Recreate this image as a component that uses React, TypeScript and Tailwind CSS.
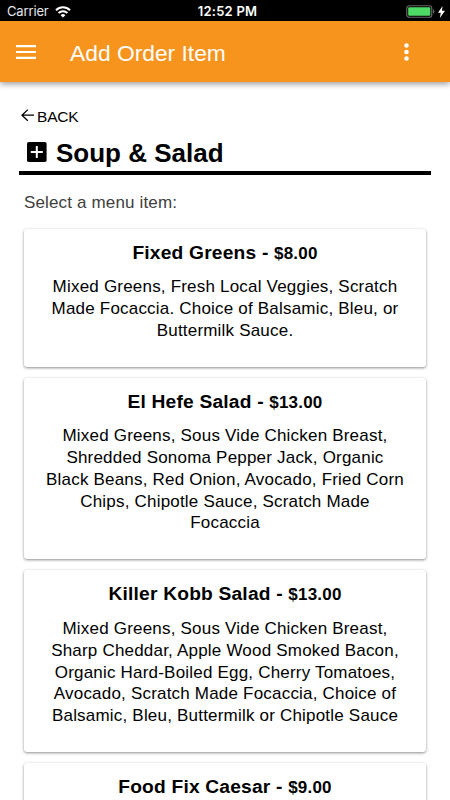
interface MenuItem {
  name: string
  price: string
  description?: string
}

const MENU_ITEMS: MenuItem[] = [
  {
    name: 'Fixed Greens',
    price: '$8.00',
    description:
      'Mixed Greens, Fresh Local Veggies, Scratch Made Focaccia. Choice of Balsamic, Bleu, or Buttermilk Sauce.',
  },
  {
    name: 'El Hefe Salad',
    price: '$13.00',
    description:
      'Mixed Greens, Sous Vide Chicken Breast, Shredded Sonoma Pepper Jack, Organic Black Beans, Red Onion, Avocado, Fried Corn Chips, Chipotle Sauce, Scratch Made Focaccia',
  },
  {
    name: 'Killer Kobb Salad',
    price: '$13.00',
    description:
      'Mixed Greens, Sous Vide Chicken Breast, Sharp Cheddar, Apple Wood Smoked Bacon, Organic Hard-Boiled Egg, Cherry Tomatoes, Avocado, Scratch Made Focaccia, Choice of Balsamic, Bleu, Buttermilk or Chipotle Sauce',
  },
  { name: 'Food Fix Caesar', price: '$9.00' },
]

function WifiIcon() {
  return (
    <svg width="16" height="12" viewBox="0 0 16 12" fill="none" stroke="#fff" strokeWidth="2">
      <path d="M1 4.2a10 10 0 0 1 14 0" />
      <path d="M3.6 7a6.3 6.3 0 0 1 8.8 0" />
      <path d="M8 11.6 5.6 9.2a3.4 3.4 0 0 1 4.8 0z" fill="#fff" stroke="none" />
    </svg>
  )
}

function StatusBar() {
  return (
    <div className="grid h-[21px] grid-cols-3 items-center bg-black pt-[2px] pr-[5px] pl-[7px] font-['Inter',sans-serif] text-[13px] leading-none text-white">
      <div className="flex items-center gap-[6px]">
        <span className="tracking-[-0.15px] text-gray-200">Carrier</span>
        <WifiIcon />
      </div>
      <span className="pl-[3px] text-center text-[13px] font-semibold tracking-[0.25px] whitespace-nowrap">12:52 PM</span>
      <div className="flex items-center justify-end gap-[3px]">
        <svg width="29" height="13" viewBox="0 0 29 13">
          <rect x="0.75" y="0.75" width="25" height="11.5" rx="2.6" fill="none" stroke="#666" strokeWidth="1.2" />
          <rect x="2.2" y="2.2" width="22.1" height="8.6" rx="1.2" fill="#4cd964" />
          <path d="M27 4.3c1.8.6 1.8 3.8 0 4.4z" fill="#666" />
        </svg>
        <svg width="7" height="12" viewBox="0 0 7 12" fill="#fff">
          <path d="M4.6 0 0 6.8h2.8L1.8 12 7 4.8H3.9z" />
        </svg>
      </div>
    </div>
  )
}

function AppBar() {
  return (
    <header className="relative z-10 flex h-[61px] items-center bg-[#f7941e] pt-[1px] text-white shadow-[0_2px_6px_rgba(0,0,0,0.4)]">
      <svg width="20" height="14" viewBox="0 0 20 14" fill="#fff" className="ml-[16px]">
        <path d="M0 0h20v2.2H0zM0 5.9h20v2.2H0zM0 11.8h20V14H0z" />
      </svg>
      <h1 className="ml-[34px] flex-1 pt-[2px] text-[22.8px] leading-none">Add Order Item</h1>
      <svg width="5" height="18" viewBox="0 0 5 18" fill="#fff" className="mr-[41px]">
        <circle cx="2.5" cy="2.5" r="2.3" />
        <circle cx="2.5" cy="9" r="2.3" />
        <circle cx="2.5" cy="15.5" r="2.3" />
      </svg>
    </header>
  )
}

function MenuCard({ item }: { item: MenuItem }) {
  return (
    <li className="rounded-[3px] bg-white px-[20px] pt-[12px] pb-[25.2px] text-center shadow-[0_1px_3px_rgba(0,0,0,0.45)]">
      <h3 className="h-[24px] text-[19.2px] leading-[24px] font-bold tracking-[0.2px]">
        {item.name} - <span className="text-[17px] leading-none">{item.price}</span>
      </h3>
      <p className="mt-[11.7px] text-[17px] leading-[21.75px] tracking-[0.2px]">{item.description}</p>
    </li>
  )
}

export default function App() {
  return (
    <div className="flex h-[800px] w-[450px] flex-col overflow-hidden bg-white font-['Liberation_Sans',Arial,sans-serif] text-black">
      <StatusBar />
      <AppBar />
      <main className="flex-1 overflow-hidden pt-[24px]">
        <div className="ml-[21px] flex h-[20px] items-center gap-[2px]">
          <svg width="14" height="14" viewBox="0 0 14 14" fill="none" stroke="#000" strokeWidth="1.3">
            <path d="M6.8 0.6 1 6.2l5.8 5.6M1 6.2h12" />
          </svg>
          <span className="pt-[1px] text-[15.5px] leading-none tracking-[-0.2px]">BACK</span>
        </div>
        <div className="mx-[19px] flex h-[49px] items-center gap-[9px] border-b-4 border-black pt-[7px] pl-[8px]">
          <svg width="20" height="20" viewBox="0 0 20 20">
            <rect width="19.6" height="20" rx="1.8" />
            <path d="M9.8 4v12M3.8 10h12" stroke="#fff" strokeWidth="2" />
          </svg>
          <h2 className="pt-[2px] text-[26px] leading-none font-bold">Soup &amp; Salad</h2>
        </div>
        <p className="mt-[18px] ml-[24px] text-[17px] leading-[20px] tracking-[0.15px] text-neutral-700">
          Select a menu item:
        </p>
        <ul className="mx-[24px] mt-[15.6px] flex flex-col gap-[11px]">
          {MENU_ITEMS.map((item) => (
            <MenuCard key={item.name} item={item} />
          ))}
        </ul>
      </main>
    </div>
  )
}
